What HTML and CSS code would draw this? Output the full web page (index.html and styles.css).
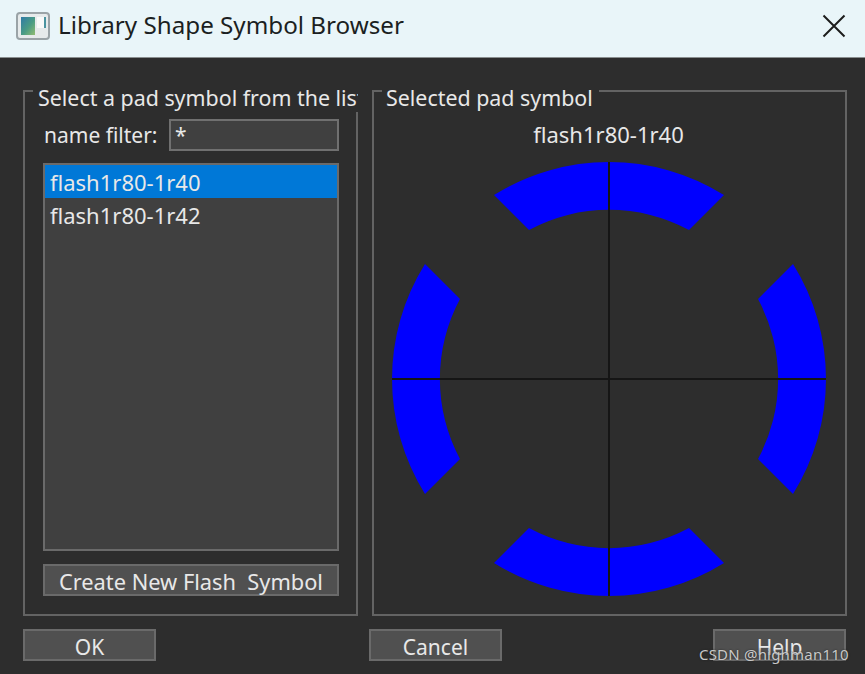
FILE: index.html
```html
<!DOCTYPE html>
<html lang="en">
<head>
    <meta charset="UTF-8">
    <title>Library Shape Symbol Browser</title>
    <link rel="stylesheet" href="styles.css">
</head>
<body>
    <div class="titlebar">
        <svg class="app-icon" width="34" height="28" viewBox="0 0 34 28">
            <defs>
                <linearGradient id="pane" x1="0" y1="0" x2="1" y2="1">
                    <stop offset="0" stop-color="#2f7aa6"/>
                    <stop offset="0.55" stop-color="#4a9c84"/>
                    <stop offset="1" stop-color="#93bd72"/>
                </linearGradient>
            </defs>
            <rect x="1" y="1" width="32" height="26" rx="3" fill="#e6eaeb" stroke="#9aa3a7" stroke-width="2"/>
            <rect x="5" y="5" width="14" height="18" fill="url(#pane)"/>
            <rect x="21" y="5" width="7" height="11" fill="#f8f9f9"/>
            <rect x="28" y="5" width="2" height="11" fill="#4a93a0"/>
        </svg>
        <span class="title">Library Shape Symbol Browser</span>
        <svg class="close-icon" width="24" height="24" viewBox="0 0 24 24">
            <path d="M1.5 1.5 L22.5 22.5 M22.5 1.5 L1.5 22.5" stroke="#1c1c1c" stroke-width="2" fill="none"/>
        </svg>
    </div>

    <div class="dialog">
        <div class="groups">
            <div class="group">
                <div class="legend">Select a pad symbol from the list</div>
                <div class="left-inner">
                    <div class="filter">
                        <label for="nameFilter">name filter:</label>
                        <input id="nameFilter" type="text" value="*">
                    </div>
                    <div class="list">
                        <div class="list-row selected">flash1r80-1r40</div>
                        <div class="list-row">flash1r80-1r42</div>
                    </div>
                    <button class="btn wide">Create New Flash&nbsp; Symbol</button>
                </div>
            </div>
            <div class="group">
                <div class="legend short">Selected pad symbol</div>
                <div class="preview">
                    <div class="preview-name">flash1r80-1r40</div>
                    <svg class="pad" width="436" height="436" viewBox="-218 -218 436 436">
                        <g fill="#0000ff">
                            <path d="M-115 -184 A217 217 0 0 1 115 -184 L80 -149 A169 169 0 0 0 -80 -149 Z"/>
                            <path d="M-115 184 A217 217 0 0 0 115 184 L80 149 A169 169 0 0 1 -80 149 Z"/>
                            <path d="M-184 -115 A217 217 0 0 0 -184 115 L-149 80 A169 169 0 0 1 -149 -80 Z"/>
                            <path d="M184 -115 A217 217 0 0 1 184 115 L149 80 A169 169 0 0 0 149 -80 Z"/>
                        </g>
                        <path d="M-217 0 H217 M0 -217 V217" stroke="#151515" stroke-width="2" fill="none"/>
                    </svg>
                </div>
            </div>
        </div>
        <div class="actions">
            <button class="btn">OK</button>
            <button class="btn">Cancel</button>
            <button class="btn">Help</button>
        </div>
    </div>

    <div class="watermark">CSDN @highman110</div>
</body>
</html>
```

FILE: styles.css
```css
html, body {
    margin: 0;
    height: 100%;
}
body {
    position: relative;
    width: 865px;
    height: 674px;
    overflow: hidden;
    background-color: #2d2d2d;
    color: #e8e8e8;
    font-family: 'Noto Sans', 'Open Sans', sans-serif;
    font-size: 22px;
}
.titlebar {
    display: flex;
    align-items: center;
    height: 58px;
    padding: 0 19px 6px 16px;
    box-sizing: border-box;
    background-color: #e9f5f9;
    border-bottom: 1px solid #8a8f90;
}
.app-icon {
    margin-right: 8px;
}
.title {
    flex: 1;
    color: #1b1f22;
    font-size: 24.2px;
    line-height: 28px;
    padding-bottom: 2px;
}
.dialog {
    padding: 32px 19px 0 23px;
}
.groups {
    display: grid;
    grid-template-columns: 335px 475px;
    column-gap: 14px;
    height: 526px;
}
.group {
    border: 2px solid #636363;
    box-sizing: border-box;
}
.legend {
    height: 26px;
    line-height: 23px;
    margin: -6px -2px 0 8px;
    padding-left: 5px;
    background-color: #2d2d2d;
    font-size: 21.4px;
    white-space: nowrap;
    overflow: hidden;
}
.legend.short {
    width: fit-content;
    margin-right: 0;
    padding-left: 4px;
    padding-right: 6px;
}
.left-inner {
    padding: 7px 17px 0 18px;
}
.filter {
    display: flex;
    align-items: center;
    height: 32px;
}
.filter label {
    width: 126px;
    padding-left: 1px;
    font-size: 21px;
    box-sizing: border-box;
}
.filter input {
    flex: 1;
    min-width: 0;
    height: 32px;
    padding: 0 4px;
    box-sizing: border-box;
    background-color: #404040;
    border: 2px solid #707070;
    color: #e8e8e8;
    font-family: inherit;
    font-size: 21px;
}
.list {
    height: 388px;
    margin-top: 12px;
    box-sizing: border-box;
    background-color: #404040;
    border: 2px solid #6a6a6a;
}
.list-row {
    height: 34px;
    line-height: 34px;
    padding-left: 5px;
}
.list-row.selected {
    height: 33px;
    background-color: #0078d7;
}
.btn {
    width: 133px;
    height: 32px;
    padding: 3px 0 0;
    box-sizing: border-box;
    background-color: #505050;
    border: 2px solid #6a6a6a;
    color: #e8e8e8;
    font-family: inherit;
    font-size: 21px;
    line-height: 26px;
}
.btn.wide {
    display: block;
    width: 100%;
    margin-top: 13px;
    font-size: 21.8px;
}
.preview {
    display: flex;
    flex-direction: column;
    align-items: center;
    padding-right: 2px;
}
.preview-name {
    height: 48px;
    line-height: 44px;
}
.pad {
    display: block;
    margin-top: 1px;
}
.actions {
    display: flex;
    justify-content: space-between;
    margin-top: 13px;
}
.actions .btn:nth-child(2) {
    margin-left: 213px;
    margin-right: 211px;
}
.watermark {
    position: absolute;
    left: 699px;
    top: 644px;
    color: #c9c9c9;
    font-size: 15px;
    letter-spacing: 0.2px;
    text-shadow: 0 0 2px #222;
}
```
